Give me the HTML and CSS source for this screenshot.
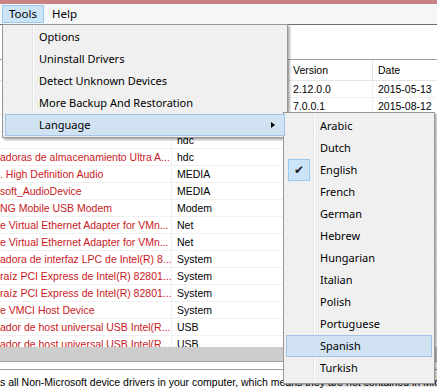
FILE: index.html
```html
<!DOCTYPE html>
<html lang="en">
<head>
    <meta charset="UTF-8">
    <title>Driver Backup</title>
    <link rel="stylesheet" href="styles.css">
</head>
<body>
    <div class="window">
        <div class="titlebar"></div>
        <div class="menubar">
            <span class="menubar-item active">Tools</span>
            <span class="menubar-item">Help</span>
        </div>
        <div class="toolbar"></div>
        <div class="list">
            <div class="list-head">
                <div class="col name"></div>
                <div class="col type"></div>
                <div class="col version">Version</div>
                <div class="col date">Date</div>
            </div>
            <div class="list-body">
                <div class="row"><div class="col name"></div><div class="col type"></div><div class="col version">2.12.0.0</div><div class="col date">2015-05-13</div></div>
                <div class="row"><div class="col name"></div><div class="col type"></div><div class="col version">7.0.0.1</div><div class="col date">2015-08-12</div></div>
                <div class="row"><div class="col name"></div><div class="col type">hdc</div><div class="col version"></div><div class="col date"></div></div>
                <div class="row"><div class="col name"></div><div class="col type">hdc</div><div class="col version"></div><div class="col date"></div></div>
                <div class="row"><div class="col name">adoras de almacenamiento Ultra A...</div><div class="col type">hdc</div><div class="col version"></div><div class="col date"></div></div>
                <div class="row"><div class="col name">. High Definition Audio</div><div class="col type">MEDIA</div><div class="col version"></div><div class="col date"></div></div>
                <div class="row"><div class="col name">soft_AudioDevice</div><div class="col type">MEDIA</div><div class="col version"></div><div class="col date"></div></div>
                <div class="row"><div class="col name">NG Mobile USB Modem</div><div class="col type">Modem</div><div class="col version"></div><div class="col date"></div></div>
                <div class="row"><div class="col name">e Virtual Ethernet Adapter for VMn...</div><div class="col type">Net</div><div class="col version"></div><div class="col date"></div></div>
                <div class="row"><div class="col name">e Virtual Ethernet Adapter for VMn...</div><div class="col type">Net</div><div class="col version"></div><div class="col date"></div></div>
                <div class="row"><div class="col name">adora de interfaz LPC de Intel(R) 8...</div><div class="col type">System</div><div class="col version"></div><div class="col date"></div></div>
                <div class="row"><div class="col name">raíz PCI Express de Intel(R) 82801...</div><div class="col type">System</div><div class="col version"></div><div class="col date"></div></div>
                <div class="row"><div class="col name">raíz PCI Express de Intel(R) 82801...</div><div class="col type">System</div><div class="col version"></div><div class="col date"></div></div>
                <div class="row"><div class="col name">e VMCI Host Device</div><div class="col type">System</div><div class="col version"></div><div class="col date"></div></div>
                <div class="row"><div class="col name">ador de host universal USB Intel(R...</div><div class="col type">USB</div><div class="col version"></div><div class="col date"></div></div>
                <div class="row"><div class="col name">ador de host universal USB Intel(R...</div><div class="col type">USB</div><div class="col version"></div><div class="col date"></div></div>
            </div>
        </div>
        <div class="hscroll"></div>
        <div class="desc">
            <p>s all Non-Microsoft device drivers in your computer, which means they are not contained in Microsoft</p>
        </div>
    </div>

    <!-- Tools menu -->
    <div class="dropdown tools-menu">
        <div class="dropdown-item">Options</div>
        <div class="dropdown-item">Uninstall Drivers</div>
        <div class="dropdown-item">Detect Unknown Devices</div>
        <div class="dropdown-item">More Backup And Restoration</div>
        <div class="dropdown-item hover">Language<span class="arrow"></span></div>
    </div>

    <!-- Language submenu -->
    <div class="dropdown lang-menu">
        <div class="dropdown-item">Arabic</div>
        <div class="dropdown-item">Dutch</div>
        <div class="dropdown-item checked"><span class="check">&#10004;</span>English</div>
        <div class="dropdown-item">French</div>
        <div class="dropdown-item">German</div>
        <div class="dropdown-item">Hebrew</div>
        <div class="dropdown-item">Hungarian</div>
        <div class="dropdown-item">Italian</div>
        <div class="dropdown-item">Polish</div>
        <div class="dropdown-item">Portuguese</div>
        <div class="dropdown-item hover">Spanish</div>
        <div class="dropdown-item">Turkish</div>
    </div>
</body>
</html>
```

FILE: styles.css
```css
body {
    margin: 0;
    padding: 0;
    width: 437px;
    height: 388px;
    overflow: hidden;
    position: relative;
    font-family: "Liberation Sans", Arial, sans-serif;
    background-color: #fff;
}
.window {
    display: flex;
    flex-direction: column;
    height: 388px;
}
.titlebar {
    height: 4px;
    background-color: #c98283;
}
.menubar {
    height: 20px;
    background-color: #f5f6f7;
    display: flex;
    align-items: flex-start;
    font-family: "Noto Sans", sans-serif;
    font-size: 11.5px;
    color: #000;
}
.menubar-item {
    margin-top: 1px;
    height: 16px;
    line-height: 16px;
    padding: 0 7px;
    border: 1px solid transparent;
}
.menubar-item.active {
    margin-left: 2px;
    padding: 0 6px;
    background-color: #cce4f7;
    border-color: #99c9ef;
}
.toolbar {
    height: 34px;
    border-top: 1px solid #6d6d6d;
    background-color: #fff;
}
.list {
    height: 287px;
    border-top: 1px solid #a0a0a0;
    overflow: hidden;
    font-size: 10.5px;
}
.list-head {
    display: flex;
    height: 20px;
    line-height: 20px;
    border-bottom: 1px solid #e5e5e5;
}
.row {
    display: flex;
    height: 16px;
    line-height: 16px;
    border-bottom: 1px solid #f0f0f0;
}
.col {
    flex-shrink: 0;
    white-space: nowrap;
    overflow: hidden;
    box-sizing: border-box;
}
.col.name {
    width: 172px;
    color: #c8191e;
    border-right: 1px solid #f0f0f0;
}
.col.type {
    width: 117px;
    padding-left: 5px;
    border-right: 1px solid #f0f0f0;
}
.col.version {
    width: 84px;
    padding-left: 4px;
    border-right: 1px solid #f0f0f0;
}
.col.date {
    width: 100px;
    padding-left: 5px;
}
.list-head .col {
    border-right-color: #e5e5e5;
}
.hscroll {
    height: 14px;
    background-color: #cdcdcd;
    border-bottom: 1px solid #a0a0a0;
}
.desc {
    flex: 1;
    border-top: 7px solid #fff;
    overflow: hidden;
}
.desc p {
    margin: 0;
    padding-top: 4px;
    border-top: 1px solid #a0a0a0;
    font-size: 10.5px;
    line-height: 16px;
    white-space: nowrap;
}

/* popup menus */
.dropdown {
    position: absolute;
    background-color: #f0f0f0;
    border: 1px solid #979797;
    box-shadow: 2px 2px 2px rgba(0, 0, 0, 0.3);
    padding: 1px 1px;
    font-family: "Noto Sans", sans-serif;
    font-size: 11px;
    color: #000;
    box-sizing: border-box;
}
.dropdown::before {
    content: "";
    position: absolute;
    top: 1px;
    bottom: 1px;
    left: 29px;
    width: 1px;
    background-color: #e2e3e3;
    border-right: 1px solid #fff;
}
.tools-menu {
    left: 2px;
    top: 24px;
    width: 286px;
    height: 114px;
}
.lang-menu {
    left: 283px;
    top: 112px;
    width: 152px;
    height: 272px;
    padding-top: 2px;
}
.dropdown-item {
    position: relative;
    height: 20px;
    line-height: 20px;
    padding-left: 33px;
    margin: 0 1px;
    border: 1px solid transparent;
}
.dropdown-item.hover {
    background-color: #d1e2f2;
    border-color: #a4c3e6;
    z-index: 1;
}
.arrow {
    position: absolute;
    right: 9px;
    top: 7px;
    width: 0;
    height: 0;
    border-top: 3.5px solid transparent;
    border-bottom: 3.5px solid transparent;
    border-left: 4px solid #000;
}
.check {
    position: absolute;
    left: 1px;
    top: -1px;
    width: 20px;
    height: 20px;
    line-height: 20px;
    text-align: center;
    font-family: "DejaVu Sans", sans-serif;
    font-size: 12px;
    color: #222;
    background-color: #cce4f7;
    border: 1px solid #99c9ef;
}
```
